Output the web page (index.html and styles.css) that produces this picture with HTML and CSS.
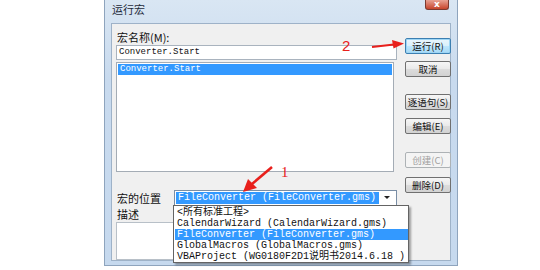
FILE: index.html
```html
<!DOCTYPE html>
<html lang="zh-CN">
<head>
  <meta charset="UTF-8" />
  <title>运行宏</title>
  <link rel="stylesheet" href="styles.css">
</head>
<body>

  <div class="window">
    <div class="titlebar">
      <span class="title">运行宏</span>
      <span class="close">x</span>
    </div>

    <div class="client">
      <div class="left">
        <div class="label name-label">宏名称(M):</div>
        <div class="textbox">Converter.Start</div>
        <div class="listbox">
          <div class="item selected">Converter.Start</div>
        </div>

        <div class="location-row">
          <span class="label">宏的位置</span>
          <div class="combo">
            <span class="combo-text">FileConverter (FileConverter.gms)</span>
            <span class="combo-arrow"></span>
          </div>
        </div>

        <div class="label desc-label">描述</div>
        <div class="desc"></div>
      </div>

      <div class="buttons">
        <button class="btn default run">运行(R)</button>
        <button class="btn cancel">取消</button>
        <button class="btn step">逐语句(S)</button>
        <button class="btn edit">编辑(E)</button>
        <button class="btn create" disabled>创建(C)</button>
        <button class="btn delete">删除(D)</button>
      </div>
    </div>

    <!-- dropdown of the location combo -->
    <div class="dropdown">
      <div class="opt">&lt;所有标准工程&gt;</div>
      <div class="opt">CalendarWizard (CalendarWizard.gms)</div>
      <div class="opt selected">FileConverter (FileConverter.gms)</div>
      <div class="opt">GlobalMacros (GlobalMacros.gms)</div>
      <div class="opt">VBAProject (WG0180F2D1说明书2014.6.18 )</div>
    </div>
  </div>

  <!-- red annotations -->
  <svg class="marks" width="540" height="270" viewBox="0 0 540 270">
    <path d="M372 47 L394 44.5" stroke="#e8201c" stroke-width="2.2" fill="none"/>
    <path d="M404 43.5 L392 40 L393.5 48.5 Z" fill="#e8201c"/>
    <path d="M272 167 L252 184" stroke="#e8201c" stroke-width="2.6" fill="none"/>
    <path d="M243 192 L248 179 L257 188 Z" fill="#e8201c"/>
  </svg>
  <span class="num num1">1</span>
  <span class="num num2">2</span>

</body>
</html>
```

FILE: styles.css
```css
* {
  margin: 0;
  padding: 0;
  box-sizing: border-box;
}

html, body {
  width: 540px;
  height: 270px;
  overflow: hidden;
  background: #fff;
  font-family: "Noto Sans CJK SC", "Liberation Sans", sans-serif;
}

.window {
  position: relative;
  margin-left: 104px;
  width: 354px;
  height: 266px;
  background: linear-gradient(180deg, #d9e6f3 0%, #c8daee 30%, #c6d9ee 100%);
  border: 1px solid #8ea4bd;
  border-top: none;
  padding: 0 6px 4px 6px;
}

.titlebar {
  height: 23px;
  display: flex;
  align-items: flex-start;
  justify-content: space-between;
}

.title {
  font-size: 11px;
  line-height: 11px;
  color: #1e2a3a;
  margin-top: 4px;
  margin-left: 1px;
}

.close {
  width: 24px;
  height: 10px;
  margin-right: 2px;
  background: linear-gradient(180deg, #e8a293, #c7442c);
  border: 1px solid #7b3a30;
  border-top: none;
  border-radius: 0 0 3px 3px;
  color: #fff;
  font-family: "DejaVu Sans", sans-serif;
  font-weight: bold;
  font-size: 9px;
  line-height: 8px;
  text-align: center;
}

.client {
  height: 238px;
  background: #f0f0f0;
  border: 1px solid #9eb2c8;
  display: flex;
  padding: 0 0 0 4px;
}

.left {
  width: 281px;
  display: flex;
  flex-direction: column;
}

.label {
  font-size: 11px;
  line-height: 12px;
  color: #111;
}

.name-label {
  margin-top: 7px;
  margin-left: 1px;
}

.textbox {
  margin-top: 2px;
  height: 15px;
  background: #fff;
  border: 1px solid #a9b3be;
  font-family: "Liberation Mono", "Noto Sans CJK SC", monospace;
  font-size: 9px;
  line-height: 13px;
  padding-left: 2px;
  color: #111;
}

.listbox {
  margin-top: 2px;
  height: 110px;
  width: 278px;
  background: #fff;
  border: 1px solid #a4acb5;
  padding: 1px;
}

.item {
  font-family: "Liberation Mono", "Noto Sans CJK SC", monospace;
  font-size: 9px;
  line-height: 11px;
  padding-left: 2px;
  color: #111;
}

.item.selected {
  background: #3399ff;
  color: #fff;
}

.location-row {
  margin-top: 18px;
  display: flex;
  align-items: center;
  gap: 0;
}

.location-row .label {
  width: 57px;
  margin-left: 1px;
}

.combo {
  width: 223px;
  height: 16px;
  background: #fff;
  border: 1px solid #7a8ea5;
  display: flex;
  align-items: center;
  padding: 1px;
}

.combo-text {
  flex: 1;
  height: 12px;
  background: #3399ff;
  color: #fff;
  font-family: "Liberation Mono", "Noto Sans CJK SC", monospace;
  font-size: 10px;
  line-height: 12px;
  padding-left: 2px;
}

.combo-arrow {
  width: 16px;
  height: 12px;
  position: relative;
}

.combo-arrow::after {
  content: "";
  position: absolute;
  left: 5px;
  top: 4px;
  border-left: 3px solid transparent;
  border-right: 3px solid transparent;
  border-top: 3px solid #222;
}

.desc-label {
  margin-top: 2px;
  margin-left: 1px;
}

.desc {
  margin-top: 2px;
  height: 38px;
  width: 280px;
  background: #fff;
  border: 1px solid #b8c0c8;
}

.buttons {
  margin-left: 8px;
  width: 46px;
  display: flex;
  flex-direction: column;
}

.btn {
  height: 16px;
  width: 46px;
  font-family: "Noto Sans CJK SC", sans-serif;
  font-size: 9.5px;
  line-height: 13px;
  color: #111;
  background: linear-gradient(180deg, #f6f6f6 0%, #e9e9e9 50%, #dcdcdc 51%, #d2d2d2 100%);
  border: 1px solid #707070;
  border-radius: 2px;
}

.btn.default {
  border-color: #3c7fb1;
  background: linear-gradient(180deg, #eaf6fd 0%, #d9f0fc 50%, #bee6fd 51%, #a7d9f5 100%);
  box-shadow: inset 0 0 0 1px #9ed6f5;
}

.btn:disabled {
  color: #a0a0a0;
  border-color: #adb2b5;
  background: #f4f4f4;
}

.run { margin-top: 14px; }
.cancel { margin-top: 7px; }
.step { margin-top: 17px; }
.edit { margin-top: 8px; }
.create { margin-top: 18px; }
.delete { margin-top: 9px; }

.dropdown {
  position: absolute;
  left: 68px;
  top: 205px;
  width: 236px;
  height: 58px;
  background: #fff;
  border: 1px solid #646464;
  box-shadow: 2px 2px 2px rgba(0, 0, 0, 0.35);
  padding: 1px 0 0 1px;
}

.opt {
  font-family: "Liberation Mono", "Noto Sans CJK SC", monospace;
  font-size: 10px;
  line-height: 11px;
  height: 11px;
  padding-left: 2px;
  color: #111;
  white-space: nowrap;
}

.opt.selected {
  background: #3399ff;
  color: #fff;
}

.marks {
  position: absolute;
  left: 0;
  top: 0;
  pointer-events: none;
}

.num {
  position: absolute;
  color: #e8201c;
  font-family: "Liberation Serif", serif;
  font-size: 15px;
  line-height: 15px;
}

.num1 {
  left: 281px;
  top: 165px;
}

.num2 {
  left: 342px;
  top: 38px;
  font-family: "Liberation Sans", sans-serif;
}
```
